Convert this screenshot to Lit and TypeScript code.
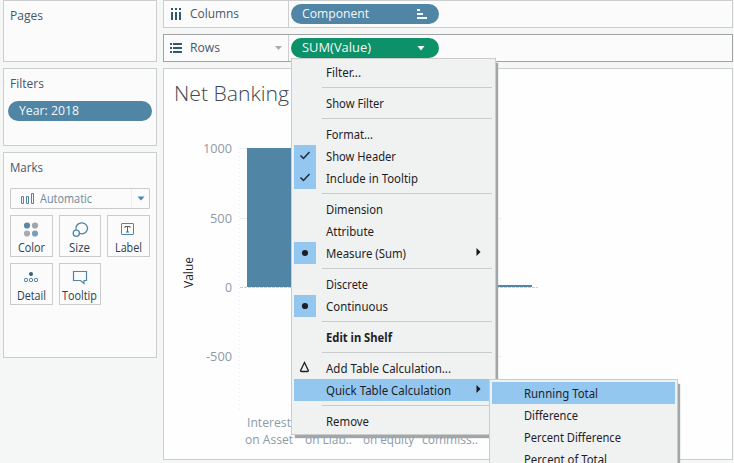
import { LitElement, html, css, svg, nothing } from "lit";
import { customElement, property } from "lit/decorators.js";
import { classMap } from "lit/directives/class-map.js";

interface Entry {
  label?: string;
  width?: number;
  mark?: "check" | "dot" | "delta";
  arrow?: boolean;
  bold?: boolean;
  active?: boolean;
}

const SEP: Entry = {};

const MAIN: Entry[] = [
  { label: "Filter...", width: 35 },
  SEP,
  { label: "Show Filter", width: 58 },
  SEP,
  { label: "Format...", width: 47 },
  { label: "Show Header", width: 70, mark: "check" },
  { label: "Include in Tooltip", width: 92, mark: "check" },
  SEP,
  { label: "Dimension", width: 57 },
  { label: "Attribute", width: 48 },
  { label: "Measure (Sum)", width: 80, mark: "dot", arrow: true },
  SEP,
  { label: "Discrete", width: 42 },
  { label: "Continuous", width: 62, mark: "dot" },
  SEP,
  { label: "Edit in Shelf", width: 66, bold: true },
  SEP,
  { label: "Add Table Calculation...", width: 125, mark: "delta" },
  { label: "Quick Table Calculation", width: 125, arrow: true, active: true },
  SEP,
  { label: "Remove", width: 43 },
];

const SUB: Entry[] = [
  { label: "Running Total", width: 74, active: true },
  { label: "Difference", width: 54 },
  { label: "Percent Difference", width: 97 },
  { label: "Percent of Total", width: 83 },
];

/* Text set on a baseline and fitted to a fixed advance width. */
@customElement("fit-text")
class FitText extends LitElement {
  @property() text = "";
  @property({ type: Number }) width = 0;
  static styles = css`
    :host { display: block; height: 16px; flex: none; }
    svg { display: block; overflow: visible; height: 16px; }
    text { fill: currentColor; }
  `;
  render() {
    return html`<svg width=${this.width} height="16">
      <text x="0" y="12" textLength=${this.width} lengthAdjust="spacingAndGlyphs">${this.text}</text>
    </svg>`;
  }
}

@customElement("context-menu")
class ContextMenu extends LitElement {
  @property({ attribute: false }) items: Entry[] = [];
  static styles = css`
    :host {
      display: block; box-sizing: border-box; padding: 2px;
      border: 1px solid #cbcdcd; background: #f0f1f1; color: #1e1e28;
      font: 12px "Noto Sans", "Open Sans", sans-serif;
      box-shadow: 3px 4px 1px -1px #a3a6a8;
    }
    .item { display: flex; align-items: center; height: 22px; }
    .item fit-text { margin-top: 2px; }
    .item.active { background: #93c7f0; }
    .mark { width: 22px; height: 22px; margin-right: 10px; flex: none; }
    .mark.on { background: #93c7f0; }
    .mark svg { display: block; }
    .item.bold { font-weight: 700; }
    .arrow { margin: -2px 12px 0 auto; }
    .sep { height: 9px; display: flex; align-items: center; padding: 0 1px 0 28px; }
    .sep::before { content: ""; height: 1px; width: 100%; background: #c9cbcc; }
  `;
  glyph(mark?: string) {
    if (mark === "check") return svg`<path d="M6.5 10.5l3 3 6-6.5" fill="none" stroke="#1e2a38" stroke-width="1.5"/>`;
    if (mark === "dot") return svg`<circle cx="11" cy="11" r="3.1" fill="#1e1e28"/>`;
    if (mark === "delta") return svg`<path d="M10.5 5.5L6.6 13.5Q6.5 14.5 7.5 14.5H13.5Q14.5 14.5 14.3 13.5Z" fill="none" stroke="#1e1e28" stroke-width="1.3"/>`;
    return nothing;
  }
  render() {
    return this.items.map((i) =>
      i.label
        ? html`<div class=${classMap({ item: true, active: !!i.active, bold: !!i.bold })}>
            <span class=${classMap({ mark: true, on: i.mark === "check" || i.mark === "dot" })}>
              <svg width="22" height="22">${this.glyph(i.mark)}</svg>
            </span>
            <fit-text .text=${i.label} .width=${i.width ?? 0}></fit-text>
            ${i.arrow ? html`<svg class="arrow" width="5" height="8"><path d="M0.5 0L4.5 4L0.5 8Z" fill="#16161e"/></svg>` : nothing}
          </div>`
        : html`<div class="sep"></div>`
    );
  }
}

const t = (text: string, width: number, cls = "") =>
  html`<fit-text class=${cls} .text=${text} .width=${width}></fit-text>`;

@customElement("app-root")
class AppRoot extends LitElement {
  static styles = css`
    * { box-sizing: border-box; }
    :host {
      display: grid; grid-template-columns: 154px 570px; column-gap: 6px;
      width: 734px; height: 463px; padding-left: 3px; position: relative;
      overflow: hidden; background: #f5f6f6; color: #46586a;
      font: 12.5px "Open Sans", "Noto Sans", sans-serif;
    }
    .side, .main { display: flex; flex-direction: column; }
    .panel { border: 1px solid #cbcdce; background: #fbfbfb; padding: 7px 6px 0; }
    .pages { height: 62px; margin-bottom: 6px; }
    .filters { height: 78px; margin-bottom: 6px; }
    .marks { height: 206px; }
    .pill {
      display: flex; align-items: center; height: 20px; border-radius: 10px;
      background: #5085a5; color: #f4f8fa; padding-left: 11px;
    }
    .year { width: 144px; margin: 9px 0 0 -2px; }
    .select {
      display: flex; align-items: center; height: 21px; width: 140px;
      border: 1px solid #c9cbcd; border-radius: 1px; margin-top: 12px; color: #70889a;
    }
    .select svg { flex: none; }
    .bars { margin: 0 5px 0 10px; }
    .drop { margin-left: auto; border-left: 1px solid #eceeef; }
    .cards { display: grid; grid-template-columns: 43px 42px 43px; gap: 6px; margin-top: 6px; }
    .card {
      height: 42px; border: 1px solid #c9cbcd; display: flex; padding-right: 1px;
      flex-direction: column; align-items: center; color: #2e4050; font-size: 12px;
    }
    .card svg { display: block; margin: 4px 0 2px; flex: none; }
    .shelf { display: flex; height: 28px; border: 1px solid #cbcdce; background: #fbfbfb; }
    .shelf.rows { margin: 6px 0; border-color: #a0a2a3; }
    .name { width: 125px; display: flex; align-items: center; border-right: 1px solid #cbcdce; padding-left: 6px; }
    .name fit-text { margin-left: 7px; }
    .name .caret { margin: 0 6px 0 auto; }
    .shelf .pill { width: 148px; margin: 3px 0 0 2px; font-weight: 500; }
    .pill svg { margin: 0 12px 0 auto; }
    .pill.green { background: #0d9168; }
    .view { height: 392px; border: 1px solid #cbcdce; background: #fefefe; }
    .view svg { display: block; overflow: visible; }
    .title { font-size: 19.5px; fill: #414751; font-weight: 300; }
    .tick { fill: #8f9aa3; font-size: 12px; }
    .cat { fill: #8c9ba8; font-size: 12px; }
    .axis { fill: #1e1e28; font-size: 12px; }
    .menu { position: absolute; left: 291px; top: 58px; width: 205px; height: 377px; }
    .submenu { position: absolute; left: 489px; top: 379px; width: 189px; height: 100px; }
  `;

  icon(name: string) {
    const s = "#5085a5";
    switch (name) {
      case "Color":
        return svg`<circle cx="8" cy="5.5" r="3.1" fill="#5f86a0"/><circle cx="16" cy="5.5" r="3.1" fill="#a3a6a8"/><circle cx="8" cy="13.5" r="3.1" fill="#a8abad"/><circle cx="16" cy="13.5" r="3.1" fill="#79a0ba"/>`;
      case "Size":
        return svg`<path d="M8.2 10A5.8 5.5 0 1 1 11.5 13.4" fill="none" stroke=${s} stroke-width="1.3"/><circle cx="8.3" cy="13.2" r="3.1" fill="none" stroke=${s} stroke-width="1.3"/>`;
      case "Label":
        return svg`<rect x="5.5" y="3.5" width="12" height="11" rx="0.5" fill="none" stroke=${s}/><path d="M9 8V6.5H14V8M11.5 6.5V12M10 12H13" fill="none" stroke="#4c6679"/>`;
      case "Detail":
        return svg`<circle cx="12" cy="6" r="2" fill="#335f7c"/><g fill="none" stroke=${s}><circle cx="7" cy="12" r="1.7"/><circle cx="12" cy="12" r="1.7"/><circle cx="17" cy="12" r="1.7"/></g>`;
      default:
        return svg`<path d="M5.5 3.5H18.5V12.5H16V15.5L12.5 12.5H5.5Z" fill="none" stroke=${s} stroke-width="1.2"/>`;
    }
  }

  card(name: string, width: number) {
    return html`<div class="card"><svg width="24" height="18">${this.icon(name)}</svg>${t(name, width)}</div>`;
  }

  label(text: string, x: number, y: number, w: number, cls: string) {
    return svg`<text class=${cls} x=${x} y=${y} textLength=${w} lengthAdjust="spacingAndGlyphs">${text}</text>`;
  }

  render() {
    return html`
      <div class="side">
        <div class="panel pages">${t("Pages", 33)}</div>
        <div class="panel filters">${t("Filters", 34)}<div class="pill year">${t("Year: 2018", 60)}</div></div>
        <div class="panel marks">
          ${t("Marks", 33)}
          <div class="select">
            <svg class="bars" width="14" height="14"><path d="M.5 4.5h2v7h-2zM5.5 4.5h2v7h-2zM10.5 1.5h2v10h-2z" fill="none" stroke="#5085a5"/></svg>
            ${t("Automatic", 52)}
            <svg class="drop" width="18" height="19"><path d="M5.5 7.5h7L9 11.5z" fill="#5085a5"/></svg>
          </div>
          <div class="cards">
            ${this.card("Color", 27)}${this.card("Size", 21)}${this.card("Label", 27)}${this.card("Detail", 29)}${this.card("Tooltip", 35)}
          </div>
        </div>
      </div>
      <div class="main">
        <div class="shelf">
          <div class="name">
            <svg width="13" height="12"><g fill="#31586f"><path d="M1 0h2v2H1zM5 0h2v2H5zM9 0h2v2H9zM1 4h2v8H1zM5 4h2v8H5zM9 4h2v8H9z"/></g></svg>
            ${t("Columns", 49)}
          </div>
          <div class="pill">${t("Component", 67)}
            <svg width="11" height="10"><path d="M1 1h3M1 5h6M1 9h10" stroke="#f4f8fa" stroke-width="2"/></svg>
          </div>
        </div>
        <div class="shelf rows">
          <div class="name">
            <svg width="13" height="10"><path d="M0 1h2M0 5h2M0 9h2M3 1h9M3 5h9M3 9h9" stroke="#31586f" stroke-width="2"/></svg>
            ${t("Rows", 30)}
            <svg class="caret" width="7" height="4"><path d="M0 0h7L3.5 4z" fill="#a9acae"/></svg>
          </div>
          <div class="pill green">${t("SUM(Value)", 69)}
            <svg width="11" height="5"><path d="M1.5 0h7L5 4.5z" fill="#fff"/></svg>
          </div>
        </div>
        <div class="view">
          <svg width="568" height="390" viewBox="164 69 568 390">
            ${this.label("Net Banking", 174, 101, 115, "title")}
            <path d="M239.5 148V411" stroke="#eceeef" stroke-dasharray="1 3"/>
            <path d="M240 148.5h7M240 218.5h7M497 218.5h5M497 356.5h5" stroke="#eceeef"/>
            <path d="M240 287.5H538" stroke="#cdd0d2" stroke-dasharray="3 1"/>
            <rect x="247" y="148" width="60" height="139" fill="#5085a5"/>
            <rect x="497" y="285" width="35" height="2" fill="#5085a5"/>
            ${this.label("1000", 203, 153, 29, "tick")}
            ${this.label("500", 210, 223, 22, "tick")}
            ${this.label("0", 225, 292, 7, "tick")}
            ${this.label("-500", 206, 361, 26, "tick")}
            <g transform="translate(193 288) rotate(-90)">${this.label("Value", 0, 0, 31, "axis")}</g>
            ${this.label("Interest", 247, 427, 44, "cat")}
            ${this.label("on Asset", 245, 444, 48, "cat")}
            ${this.label("on Liab..", 305, 444, 47, "cat")}
            ${this.label("on equity", 363, 444, 51, "cat")}
            ${this.label("commiss..", 422, 444, 56, "cat")}
          </svg>
        </div>
      </div>
      <context-menu class="menu" .items=${MAIN}></context-menu>
      <context-menu class="submenu" .items=${SUB}></context-menu>
    `;
  }
}
